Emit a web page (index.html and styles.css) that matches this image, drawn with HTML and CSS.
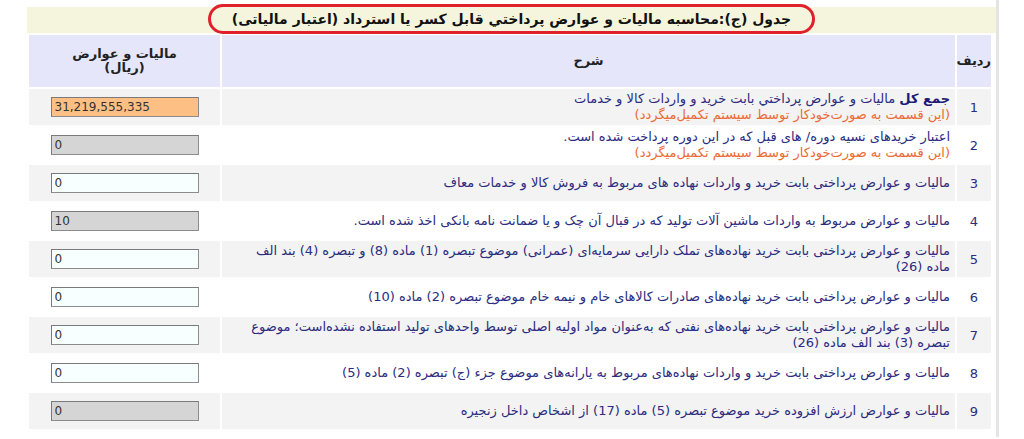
FILE: index.html
```html
<!DOCTYPE html>
<html lang="fa">
<head>
<meta charset="utf-8">
<title>جدول (ج)</title>
<link rel="stylesheet" href="styles.css">
</head>
<body>
<div class="panel">
  <div class="title"><span class="title-box">جدول (ج):محاسبه ماليات و عوارض پرداختي قابل کسر يا استرداد (اعتبار مالياتی)</span></div>
  <table class="grid" dir="rtl">
    <colgroup><col class="c-num"><col class="c-desc"><col class="c-val"></colgroup>
    <thead>
      <tr><th>رديف</th><th>شرح</th><th>ماليات و عوارض<br>(ريال)</th></tr>
    </thead>
    <tbody>
      <tr class="alt"><td class="num">1</td><td class="desc"><b class="strong">جمع کل</b> ماليات و عوارض پرداختي بابت خريد و واردات کالا و خدمات<span class="note">(اين قسمت به صورت‌خودکار توسط سيستم تکميل‌ميگردد)</span></td><td class="val"><input class="field total" type="text" value="31,219,555,335" readonly></td></tr>
      <tr><td class="num">2</td><td class="desc">اعتبار خريدهای نسيه دوره/ های قبل که در اين دوره پرداخت شده است.<span class="note">(اين قسمت به صورت‌خودکار توسط سيستم تکميل‌ميگردد)</span></td><td class="val"><input class="field locked" type="text" value="0" readonly></td></tr>
      <tr class="alt"><td class="num">3</td><td class="desc">ماليات و عوارض پرداختی بابت خريد و واردات نهاده های مربوط به فروش کالا و خدمات معاف</td><td class="val"><input class="field" type="text" value="0"></td></tr>
      <tr><td class="num">4</td><td class="desc">ماليات و عوارض مربوط به واردات ماشين آلات توليد که در قبال آن چک و يا ضمانت نامه بانکی اخذ شده است.</td><td class="val"><input class="field locked" type="text" value="10" readonly></td></tr>
      <tr class="alt"><td class="num">5</td><td class="desc">ماليات و عوارض پرداختی بابت خريد نهاده‌های تملک دارايی سرمايه‌ای (عمرانی) موضوع تبصره (1) ماده (8) و تبصره (4) بند الف<br>ماده (26)</td><td class="val"><input class="field" type="text" value="0"></td></tr>
      <tr><td class="num">6</td><td class="desc">ماليات و عوارض پرداختی بابت خريد نهاده‌های صادرات کالاهای خام و نيمه خام موضوع تبصره (2) ماده (10)</td><td class="val"><input class="field" type="text" value="0"></td></tr>
      <tr class="alt"><td class="num">7</td><td class="desc">ماليات و عوارض پرداختی بابت خريد نهاده‌های نفتی که به‌عنوان مواد اوليه اصلی توسط واحدهای توليد استفاده نشده‌است؛ موضوع<br>تبصره (3) بند الف ماده (26)</td><td class="val"><input class="field" type="text" value="0"></td></tr>
      <tr><td class="num">8</td><td class="desc">ماليات و عوارض پرداختی بابت خريد و واردات نهاده‌های مربوط به يارانه‌های موضوع جزء (ج) تبصره (2) ماده (5)</td><td class="val"><input class="field" type="text" value="0"></td></tr>
      <tr class="alt"><td class="num">9</td><td class="desc">ماليات و عوارض ارزش افزوده خريد موضوع تبصره (5) ماده (17) از اشخاص داخل زنجيره</td><td class="val"><input class="field locked" type="text" value="0" readonly></td></tr>
    </tbody>
  </table>
</div>
</body>
</html>
```
FILE: styles.css
```css
html, body {
  margin: 0;
  padding: 0;
  background: #ffffff;
}

body {
  font-family: "DejaVu Sans", Tahoma, sans-serif;
  font-size: 13px;
  color: #222;
}

.panel {
  margin-left: 27px;
  width: 969px;
  padding-top: 7px;
  padding-bottom: 6px;
  border-right: 3px solid #e4e4e4;
}

.title {
  background: #f5f5dd;
  height: 26px;
  display: flex;
  justify-content: center;
  align-items: flex-start;
  direction: rtl;
}

.title-box {
  margin-top: -3px;
  height: 30px;
  box-sizing: border-box;
  border: 3px solid #e0202a;
  border-radius: 15px;
  padding: 0 21px;
  font-weight: bold;
  font-size: 14px;
  line-height: 24px;
  color: #111;
  white-space: nowrap;
}

.grid {
  width: 966px;
  border-spacing: 2px;
  table-layout: fixed;
}

.c-num { width: 34px; }
.c-desc { width: 733px; }
.c-val { width: 191px; }

.grid th {
  background: #e6e6fa;
  height: 52px;
  padding: 0;
  font-size: 13px;
  font-weight: bold;
  color: #222;
  text-align: center;
  line-height: 14px;
}

.grid td {
  height: 36px;
  padding: 0 5px;
  vertical-align: middle;
}

.grid tr.alt td {
  background: #f3f3f3;
}

.num {
  text-align: center;
  color: #2c2c80;
  font-size: 13px;
}

.grid td.num { padding: 0; }

.desc {
  color: #2c2c80;
  font-size: 13px;
  line-height: 16px;
  text-align: right;
}

.strong {
  color: #1c1c78;
}

.note {
  display: block;
  color: #ec6a35;
}

.grid td.val {
  text-align: center;
  padding: 0;
}

.field {
  width: 148px;
  height: 20px;
  box-sizing: border-box;
  border: 1px solid #8c8c8c;
  border-top-color: #7a7a7a;
  border-left-color: #7a7a7a;
  padding: 0 3px;
  margin: 0;
  background: #f8ffff;
  color: #333;
  font-family: "DejaVu Sans", Tahoma, sans-serif;
  font-size: 12px;
  direction: ltr;
  text-align: left;
  vertical-align: middle;
}

.field.total {
  background: #fdbf83;
}

.field.locked {
  background: #d5d5d5;
}
```
